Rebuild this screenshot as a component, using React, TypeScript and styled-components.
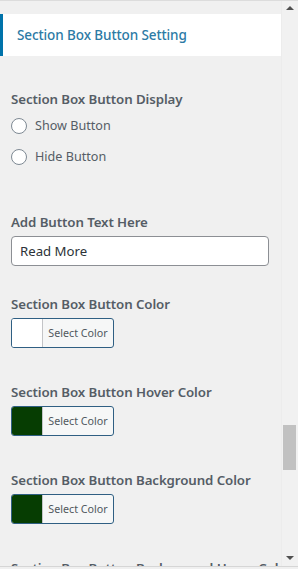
import React from "react";
import styled, { createGlobalStyle } from "styled-components";

const Global = createGlobalStyle`
  html, body { margin: 0; padding: 0; background: #f0f0f0; }
  body { font-family: "Noto Sans", "Open Sans", sans-serif; }
`;

const Frame = styled.div`
  height: 565px;
  border-top: 1px solid #dcdcdc;
  border-bottom: 1px solid #d6d6d6;
  display: flex;
  overflow: hidden;
  background: #f0f0f0;
`;

const Content = styled.div`
  width: 281px;
  padding-top: 13px;
  flex: none;
`;

const Header = styled.div`
  height: 42px;
  background: #fff;
  border-left: 3px solid #0073aa;
  padding-left: 14px;
  display: flex;
  align-items: center;
  font-size: 13.5px;
  font-weight: 500;
  color: #2c7aa5;
  letter-spacing: -0.1px;
`;

const Body = styled.div`
  padding: 33px 0 0 11px;
`;

const Section = styled.div<{ $after: number }>`
  display: flex;
  flex-direction: column;
  margin-bottom: ${(p) => p.$after}px;
`;

const Label = styled.div`
  height: 20px;
  line-height: 20px;
  font-size: 13.3px;
  font-weight: 600;
  color: #555d66;
  white-space: nowrap;
  letter-spacing: -0.1px;
`;

const RadioGroup = styled.div`
  margin-top: 1px;
  display: flex;
  flex-direction: column;
`;

const RadioRow = styled.label`
  height: 31px;
  display: flex;
  align-items: center;
  gap: 8px;
  font-size: 12.6px;
  color: #555d66;
`;

const RadioCircle = styled.span`
  width: 14px;
  height: 14px;
  border: 1px solid #7e8993;
  border-radius: 50%;
  background: #fff;
  flex: none;
`;

const TextInput = styled.input`
  margin-top: 4px;
  width: 258px;
  height: 30px;
  box-sizing: border-box;
  border: 1px solid #8c8f94;
  border-radius: 4px;
  background: #fff;
  padding: 0 8px;
  font-family: "Noto Sans", "Open Sans", sans-serif;
  font-size: 13.2px;
  color: #2c3338;
  outline: none;
`;

const ColorButton = styled.button`
  margin-top: 4px;
  width: 103px;
  height: 30px;
  box-sizing: border-box;
  border: 1px solid #2f5f83;
  border-radius: 3px;
  background: #f6f7f7;
  padding: 0;
  display: flex;
  align-items: stretch;
  overflow: hidden;
  cursor: pointer;
`;

const Swatch = styled.span<{ $color: string }>`
  width: 30px;
  flex: none;
  background: ${(p) => p.$color};
  border-right: 1px solid #c3c4c7;
`;

const ButtonText = styled.span`
  flex: 1;
  display: flex;
  align-items: center;
  justify-content: center;
  font-family: "Noto Sans", "Open Sans", sans-serif;
  font-size: 10.7px;
  color: #50575e;
`;

const ScrollTrack = styled.div`
  position: relative;
  flex: 1;
  background: #f1f1f1;
  border-left: 1px solid #ececec;
`;

const Arrow = styled.div<{ $down?: boolean }>`
  position: absolute;
  left: 4px;
  ${(p) => (p.$down ? "bottom: 6px;" : "top: 5px;")}
  width: 0;
  height: 0;
  border-left: 4px solid transparent;
  border-right: 4px solid transparent;
  ${(p) =>
    p.$down ? "border-top: 4px solid #505050;" : "border-bottom: 4px solid #505050;"}
`;

const Thumb = styled.div`
  position: absolute;
  left: 1px;
  top: 424px;
  width: 13px;
  height: 45px;
  background: #c1c1c1;
`;

const colorSections = [
  { label: "Section Box Button Color", color: "#ffffff" },
  { label: "Section Box Button Hover Color", color: "#063d02" },
  { label: "Section Box Button Background Color", color: "#063d02" },
];

export default function App() {
  return (
    <>
      <Global />
      <Frame>
        <Content>
          <Header>Section Box Button Setting</Header>
          <Body>
            <Section $after={40}>
              <Label>Section Box Button Display</Label>
              <RadioGroup>
                <RadioRow>
                  <RadioCircle />
                  Show Button
                </RadioRow>
                <RadioRow>
                  <RadioCircle />
                  Hide Button
                </RadioRow>
              </RadioGroup>
            </Section>
            <Section $after={28}>
              <Label>Add Button Text Here</Label>
              <TextInput defaultValue="Read More" />
            </Section>
            {colorSections.map((s) => (
              <Section key={s.label} $after={34}>
                <Label>{s.label}</Label>
                <ColorButton>
                  <Swatch $color={s.color} />
                  <ButtonText>Select Color</ButtonText>
                </ColorButton>
              </Section>
            ))}
            <Section $after={0}>
              <Label>Section Box Button Background Hover Color</Label>
            </Section>
          </Body>
        </Content>
        <ScrollTrack>
          <Arrow />
          <Thumb />
          <Arrow $down />
        </ScrollTrack>
      </Frame>
    </>
  );
}
